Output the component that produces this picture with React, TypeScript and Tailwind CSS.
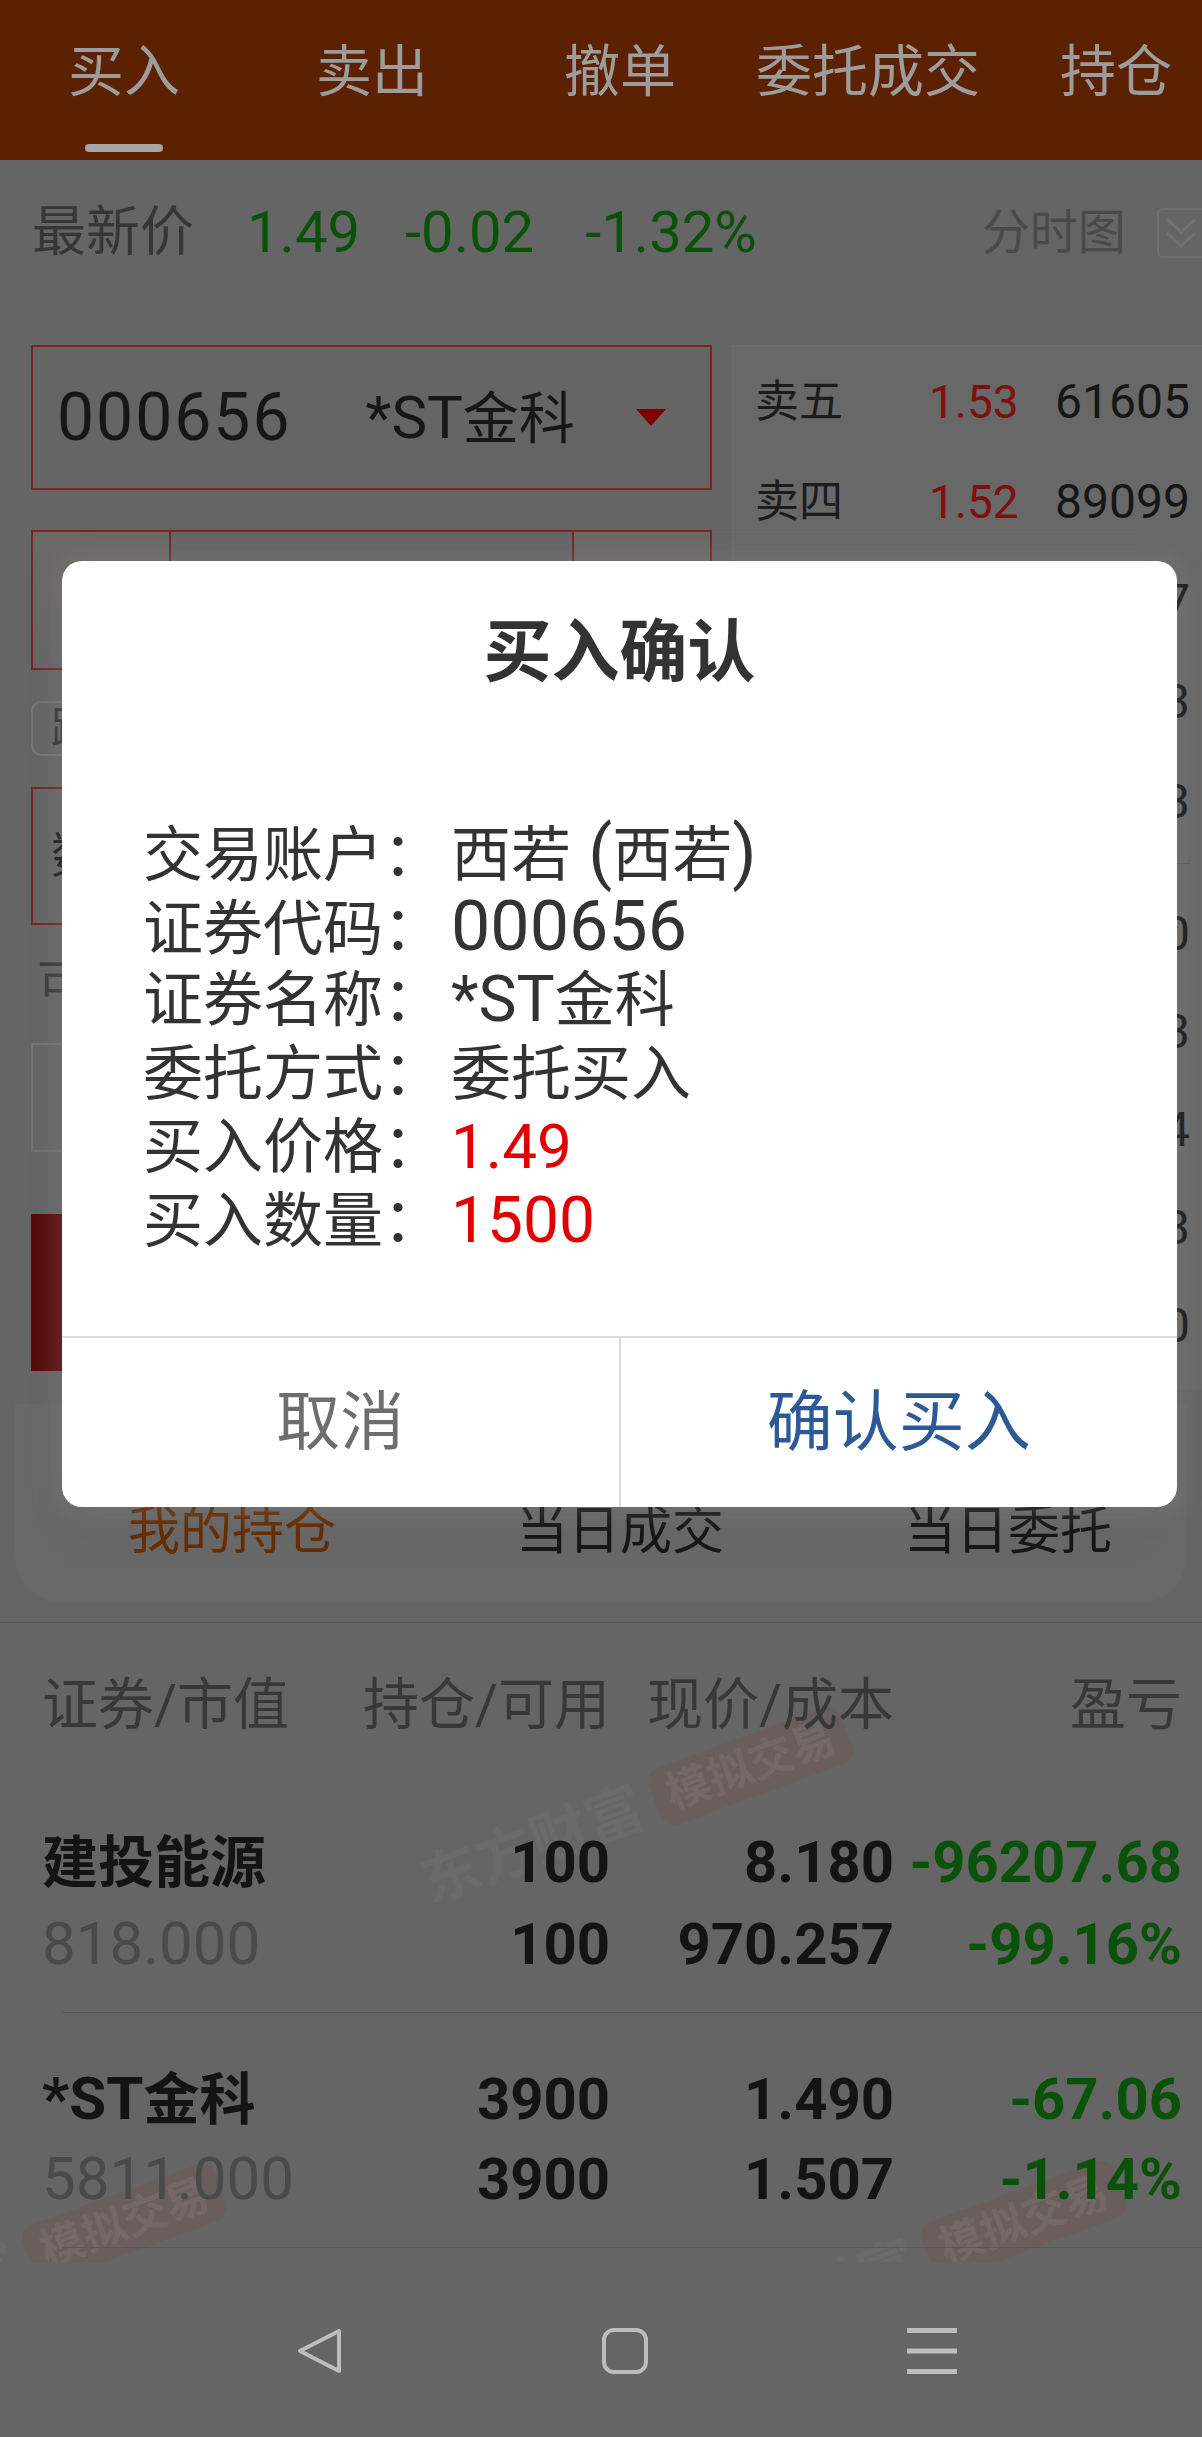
import React from 'react';

type Level = { label: string; price: string; vol: string; color: string };

type Position = {
  name: React.ReactNode;
  value: string;
  hold: string;
  avail: string;
  price: string;
  cost: string;
  pl: string;
  plPct: string;
};

const red = 'text-[#7f1010]';
const green = 'text-[#0a520a]';

const asks: Level[] = [
  { label: '卖五', price: '1.53', vol: '61605', color: red },
  { label: '卖四', price: '1.52', vol: '89099', color: red },
  { label: '卖三', price: '1.51', vol: '50317', color: 'text-[#1a1a1a]' },
  { label: '卖二', price: '1.50', vol: '73623', color: green },
  { label: '卖一', price: '1.49', vol: '12843', color: green },
];

const bids: Level[] = [
  { label: '买一', price: '1.48', vol: '35210', color: green },
  { label: '买二', price: '1.47', vol: '28803', color: green },
  { label: '买三', price: '1.46', vol: '41174', color: green },
  { label: '买四', price: '1.45', vol: '60913', color: green },
  { label: '买五', price: '1.44', vol: '52340', color: green },
];

const positions: Position[] = [
  {
    name: '建投能源',
    value: '818.000',
    hold: '100',
    avail: '100',
    price: '8.180',
    cost: '970.257',
    pl: '-96207.68',
    plPct: '-99.16%',
  },
  {
    name: (
      <>
        <span className="text-[60px]">*ST</span>金科
      </>
    ),
    value: '5811.000',
    hold: '3900',
    avail: '3900',
    price: '1.490',
    cost: '1.507',
    pl: '-67.06',
    plPct: '-1.14%',
  },
];

const tabs = ['买入', '卖出', '撤单', '委托成交', '持仓'];

const Watermark = ({ className }: { className: string }) => (
  <div className={'absolute flex items-center gap-[14px] -rotate-[20deg] pointer-events-none ' + className}>
    <span className="text-[58px] font-bold leading-none text-[#6a6a6a]">东方财富</span>
    <span className="rounded-[14px] bg-[#695e5c] px-[14px] py-[8px] text-[44px] font-bold leading-none text-[#736866]">
      模拟交易
    </span>
  </div>
);

const BookRow = ({ l, h }: { l: Level; h: string }) => (
  <div className={'flex items-center ' + h}>
    <span className="w-[174px] text-[44px] text-[#1c1c1c]">{l.label}</span>
    <span className={'text-[46px] ' + l.color}>{l.price}</span>
    <span className="flex-1 text-right text-[48px] text-[#161616]">{l.vol}</span>
  </div>
);

const ModalLine = ({ label, children }: { label: string; children: React.ReactNode }) => (
  <div className="h-[73.5px] leading-[73.5px] whitespace-nowrap">
    <span>{label}：</span>
    <span className="ml-[8px]">{children}</span>
  </div>
);

export default function App() {
  return (
    <div className="relative w-[1202px] h-[2437px] overflow-hidden bg-[#646564] font-['Roboto','Noto_Sans_CJK_SC',sans-serif]">
      {/* watermarks */}
      <Watermark className="left-[410px] top-[1778px]" />
      <Watermark className="left-[-216px] top-[2235px]" />
      <Watermark className="left-[683px] top-[2232px]" />

      {/* header tabs */}
      <div className="relative h-[160px] bg-[#5b2100] flex overflow-hidden">
        {tabs.map((t, i) => (
          <div key={t} className="w-[248px] shrink-0 flex flex-col items-center pt-[40px]">
            <span className="text-[56px] leading-[64px] text-[#9c9c9c] whitespace-nowrap">{t}</span>
            {i === 0 && <div className="mt-[40px] h-[8px] w-[78px] rounded-full bg-[#a6a6a6]" />}
          </div>
        ))}
      </div>

      {/* latest price */}
      <div className="relative h-[145px] flex items-center pl-[32px] whitespace-nowrap">
        <span className="text-[54px] text-[#363636]">最新价</span>
        <span className={'ml-[53px] text-[58px] ' + green}>1.49</span>
        <span className={'ml-[45px] text-[58px] ' + green}>-0.02</span>
        <span className={'ml-[51px] text-[58px] ' + green}>-1.32%</span>
        <span className="ml-[225px] text-[48px] text-[#4a4a4a]">分时图</span>
        <div className="ml-[31px] h-[50px] w-[60px] shrink-0 rounded-[6px] border-2 border-[#6f6f6f] flex items-center pl-[6px]">
          <svg width="32" height="34" viewBox="0 0 32 34" fill="none" stroke="#717171" strokeWidth="3">
            <polyline points="2,3 16,16 30,3" />
            <polyline points="2,17 16,30 30,17" />
          </svg>
        </div>
      </div>

      {/* order form + book */}
      <div className="relative h-[1099px] pt-[40px] flex">
        <div className="ml-[31px] w-[681px] flex flex-col">
          <div className="h-[145px] border-2 border-[#7a2424] flex items-center pl-[24px] text-[#171717] whitespace-nowrap">
            <span className="text-[66px] tracking-[2px] leading-none">000656</span>
            <span className="ml-[74px] text-[56px] leading-none">
              <span className="text-[60px]">*ST</span>金科
            </span>
            <svg className="ml-[61px]" width="30" height="17" viewBox="0 0 30 17">
              <polygon points="0,0 30,0 15,17" fill="#7d0000" />
            </svg>
          </div>

          <div className="mt-[40px] h-[140px] border-2 border-[#7a2424] flex">
            <div className="w-[138px] bg-gradient-to-b from-[#6c6965] to-[#656565] border-r-2 border-[#7a2424]" />
            <div className="flex-1" />
            <div className="w-[138px] bg-gradient-to-b from-[#6c6965] to-[#656565] border-l-2 border-[#7a2424]" />
          </div>

          <div className="mt-[31px] h-[55px] flex gap-[20px]">
            <div className="flex-1 rounded-[10px] border-2 border-[#767676] flex items-center pl-[18px] text-[44px] text-[#333]">
              跌停
            </div>
            <div className="flex-1 rounded-[10px] border-2 border-[#767676]" />
          </div>

          <div className="mt-[31px] h-[138px] border-2 border-[#7a2424] flex items-center pl-[18px] text-[50px] text-[#1a1a1a]">
            数量
          </div>

          <div className="h-[118px] flex items-center pl-[6px] text-[50px] text-[#3a3a3a]">可买</div>

          <div className="h-[109px] border-2 border-[#737373]" />

          <div className="mt-[62px] h-[157px] bg-[#570b0b]" />
        </div>

        <div className="ml-[20px] flex-1 h-[1045px] bg-[#676867] border-l border-t border-[#6d6d6d] pl-[22px] pr-[12px] pt-[6px]">
          {asks.map((l) => (
            <BookRow key={l.label} l={l} h="h-[100px]" />
          ))}
          <div className="mt-[11px] mb-[21px] h-px bg-[#5d5d5d]" />
          {bids.map((l) => (
            <BookRow key={l.label} l={l} h="h-[98px]" />
          ))}
        </div>
      </div>

      {/* record tabs card */}
      <div className="relative mx-[15px] h-[199px] rounded-b-[48px] bg-[#686868]">
        <div className="mx-[23px] h-[159px] rounded-b-[40px] bg-[#666766]" />
        <div className="absolute left-[23px] top-[100px] w-[1164px] grid grid-cols-3 text-[52px] leading-[56px]">
          <span className="text-center text-[#672c00]">我的持仓</span>
          <span className="text-center text-[#161616]">当日成交</span>
          <span className="text-center text-[#161616]">当日委托</span>
        </div>
      </div>

      <div className="mt-[19px] h-px bg-[#595959]" />

      {/* positions table */}
      <div className="relative">
        <div className="h-[164px] grid grid-cols-[314px_254px_284px_288px] pl-[42px] items-center text-[56px] text-[#383838] whitespace-nowrap">
          <span>证券/市值</span>
          <span className="text-right">持仓/可用</span>
          <span className="text-right">现价/成本</span>
          <span className="text-right">盈亏</span>
        </div>

        {positions.map((p, i) => (
          <div key={i}>
            <div className={(i === 0 ? 'pt-[32px] ' : 'pt-[41px] ') + 'pb-[33px] pl-[42px] whitespace-nowrap'}>
              <div className="h-[80px] grid grid-cols-[314px_254px_284px_288px] items-center text-[58px] font-bold text-[#141414]">
                <span className="text-[56px]">{p.name}</span>
                <span className="text-right">{p.hold}</span>
                <span className="text-right">{p.price}</span>
                <span className={'text-right ' + green}>{p.pl}</span>
              </div>
              <div className="h-[80px] grid grid-cols-[314px_254px_284px_288px] items-center text-[58px] font-bold text-[#141414]">
                <span className="text-[60px] font-normal text-[#4a4a4a]">{p.value}</span>
                <span className="text-right">{p.avail}</span>
                <span className="text-right">{p.cost}</span>
                <span className={'text-right ' + green}>{p.plPct}</span>
              </div>
            </div>
            <div className="ml-[62px] h-px bg-[#585858]" />
          </div>
        ))}
      </div>

      {/* system nav bar */}
      <div className="relative mt-[14px] h-[176px] bg-[#646564] flex items-start pt-[66px] pl-[296px]">
        <svg width="46" height="46" viewBox="0 0 46 46" fill="none" stroke="#bdbdbd" strokeWidth="4" strokeLinejoin="round">
          <path d="M43 3 L43 43 L4 23 Z" />
        </svg>
        <svg className="ml-[260px]" width="46" height="46" viewBox="0 0 46 46" fill="none" stroke="#bdbdbd" strokeWidth="4">
          <rect x="2" y="2" width="42" height="42" rx="10" />
        </svg>
        <svg className="ml-[259px]" width="50" height="46" viewBox="0 0 50 46" stroke="#bdbdbd" strokeWidth="5">
          <line x1="0" y1="2.5" x2="50" y2="2.5" />
          <line x1="0" y1="23" x2="50" y2="23" />
          <line x1="0" y1="43.5" x2="50" y2="43.5" />
        </svg>
      </div>

      {/* confirm dialog */}
      <div className="absolute left-[62px] top-[561px] w-[1115px] h-[946px] rounded-[20px] bg-white flex flex-col overflow-hidden shadow-[0_0_22px_10px_rgba(140,140,140,0.22)]">
        <div className="pt-[56px] h-[128px] text-center text-[68px] leading-[72px] font-bold text-[#333]">买入确认</div>
        <div className="mt-[128px] pl-[81px] text-[60px] text-[#333]">
          <ModalLine label="交易账户">
            西若<span className="text-[70px] leading-none"> (</span>西若<span className="text-[70px] leading-none">)</span>
          </ModalLine>
          <ModalLine label="证券代码">
            <span className="text-[70px] leading-none">000656</span>
          </ModalLine>
          <ModalLine label="证券名称">
            <span className="text-[64px] leading-none">*ST</span>金科
          </ModalLine>
          <ModalLine label="委托方式">委托买入</ModalLine>
          <ModalLine label="买入价格">
            <span className="text-[62px] leading-none text-[#e00000]">1.49</span>
          </ModalLine>
          <ModalLine label="买入数量">
            <span className="text-[64px] leading-none text-[#e00000]">1500</span>
          </ModalLine>
        </div>
        <div className="mt-auto h-[171px] border-t-2 border-[#dedede] flex">
          <div className="flex-1 flex items-center justify-center text-[64px] text-[#6e6e6e]">取消</div>
          <div className="w-[2px] bg-[#dedede]" />
          <div className="flex-1 flex items-center justify-center text-[66px] text-[#2d5a96]">确认买入</div>
        </div>
      </div>
    </div>
  );
}
